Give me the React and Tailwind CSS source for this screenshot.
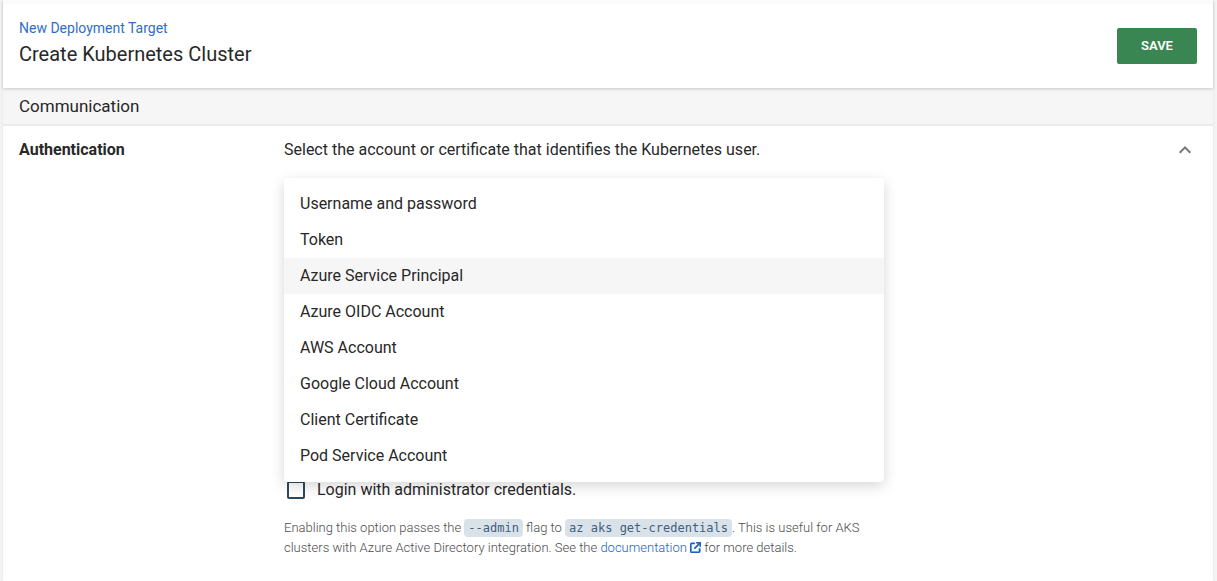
import { useState } from "react";
import { FaArrowUpRightFromSquare } from "react-icons/fa6";

const accountTypes = [
  "Username and password",
  "Token",
  "Azure Service Principal",
  "Azure OIDC Account",
  "AWS Account",
  "Google Cloud Account",
  "Client Certificate",
  "Pod Service Account",
];

function PageHeader() {
  return (
    <header className="relative z-10 flex items-start justify-between border-t-4 border-[#fbfbfb] bg-white px-4 pt-3.5 pb-[18px] shadow-[0_1px_3px_rgba(0,0,0,0.2)]">
      <div>
        <a href="#targets" className="block text-sm leading-5 text-[#2f6fc8]">
          New Deployment Target
        </a>
        <h1 className="text-xl leading-8">Create Kubernetes Cluster</h1>
      </div>
      <button
        type="button"
        className="mt-2.5 h-9 w-20 rounded-xs bg-[#3a8652] text-[13px] font-semibold text-white"
      >
        SAVE
      </button>
    </header>
  );
}

function AccountMenu() {
  const [selected, setSelected] = useState("Azure Service Principal");
  return (
    <div
      role="listbox"
      aria-label="Account type"
      className="relative z-10 mt-4 rounded-sm bg-white py-2 shadow-[0_4px_14px_rgba(0,0,0,0.16)]"
    >
      {accountTypes.map((name) => (
        <button
          key={name}
          type="button"
          role="option"
          aria-selected={selected === name}
          onClick={() => setSelected(name)}
          className="block h-9 w-full px-4 text-left text-base aria-selected:bg-[#f6f6f6]"
        >
          {name}
        </button>
      ))}
    </div>
  );
}

function Code({ children }) {
  return (
    <code className="rounded-sm bg-[#dae2e9] px-1 py-0.5 font-['DejaVu_Sans_Mono',monospace] text-xs font-normal text-[#3e607d]">
      {children}
    </code>
  );
}

export default function App() {
  return (
    <div className="min-h-screen bg-[#f4f4f4] pr-1 pl-[3px] font-[Roboto,sans-serif] text-[#282828]">
      <main className="flex min-h-screen flex-col bg-white shadow-[0_0_3px_rgba(0,0,0,0.08)]">
        <PageHeader />
        <h2 className="border-b-2 border-[#ebebeb] bg-[#f6f6f6] px-4 py-1.5 text-[17px] leading-6">
          Communication
        </h2>
        <section className="flex items-start px-4 pt-3">
          <h3 className="w-[265px] shrink-0 text-base leading-6 font-bold">Authentication</h3>
          <div className="min-w-0 max-w-[600px] flex-1">
            <p className="text-base leading-6">
              Select the account or certificate that identifies the Kubernetes user.
            </p>
            <AccountMenu />
            <label className="-mt-1 flex h-6 items-center gap-3 pl-[3px] text-base">
              <input
                type="checkbox"
                className="size-[18px] appearance-none rounded-xs border-2 border-[#2e475d] bg-white checked:bg-[#2e475d]"
              />
              Login with administrator credentials.
            </label>
            <p className="mt-4 text-[13px] leading-5 font-light text-[#4c4c4c]">
              Enabling this option passes the <Code>--admin</Code> flag to{" "}
              <Code>az aks get-credentials</Code>. This is useful for AKS clusters with Azure Active
              Directory integration. See the{" "}
              <a href="#documentation" className="text-[#1a62c4]">
                documentation{" "}
                <FaArrowUpRightFromSquare
                  className="-mt-0.5 inline size-[11px] stroke-current stroke-[24px]"
                  aria-hidden="true"
                />
              </a>{" "}
              for more details.
            </p>
          </div>
          <button
            type="button"
            aria-label="Collapse authentication"
            className="ml-auto grid size-6 place-items-center text-[#757575]"
          >
            <svg viewBox="0 0 24 24" className="size-6" fill="currentColor">
              <path d="m12 8-6 6 1.41 1.41L12 10.83l4.59 4.58L18 14z" />
            </svg>
          </button>
        </section>
      </main>
    </div>
  );
}
